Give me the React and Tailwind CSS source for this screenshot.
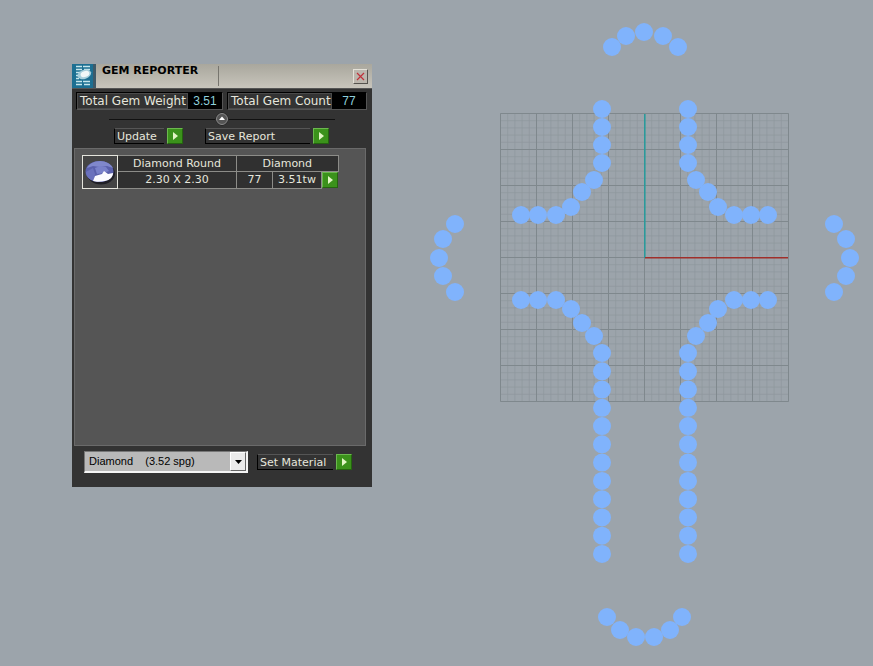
const BEAD_RADIUS = 9;

const range = (count, start, step) => Array.from({ length: count }, (_, i) => start + i * step);

const upperArms = [
  ...range(4, 109, 18).flatMap((y) => [[602, y], [688, y]]),
  [594, 180], [582, 192], [571, 207], [556, 215], [538, 215], [521, 215],
  [696, 180], [708, 192], [718, 207], [734, 215], [751, 215], [768, 215],
];

const lowerArms = [
  ...range(12, 353, 18.27).flatMap((y) => [[602, y], [688, y]]),
  [594, 336], [582, 323], [571, 309], [556, 300], [538, 300], [521, 300],
  [696, 336], [708, 323], [718, 309], [734, 300], [751, 300], [768, 300],
];

const endCaps = [
  [612, 47], [626, 36], [644, 32], [663, 36], [678, 47],
  [455, 224], [443, 239], [439, 258], [443, 276], [455, 292],
  [834, 224], [846, 239], [850, 258], [846, 276], [834, 292],
  [607, 617], [620, 630], [636, 637], [654, 637], [670, 630], [682, 617],
];

const beads = [...upperArms, ...lowerArms, ...endCaps];

const Viewport = () => (
  <svg viewBox="372 0 501 666" className="min-w-0 flex-1" role="img" aria-label="Top view of the gem layout">
    {range(41, 0, 7.2).map((d) => (
      <path key={d} d={`M${500.5 + d} 113.5v288M500.5 ${113.5 + d}h288`} stroke="#8f979c" strokeOpacity="0.7" />
    ))}
    {range(9, 0, 36).map((d) => (
      <path key={d} d={`M${500.5 + d} 113.5v288M500.5 ${113.5 + d}h288`} stroke="#7f888d" />
    ))}
    <path d="M644.8 114v144" stroke="#2a9a9b" strokeWidth="1.600" />
    <path d="M645 257.700h143" stroke="#a02f2a" strokeWidth="1.600" />
    {beads.map(([x, y]) => (
      <circle key={`${x}-${y}`} cx={x} cy={y} r={BEAD_RADIUS} fill="#80b3fc" />
    ))}
  </svg>
);

const Logo = () => (
  <svg viewBox="0 0 24 24" className="size-6 shrink-0" aria-hidden="true">
    <rect width="24" height="24" fill="#1d6f92" />
    <path d="M21 0h3v24h-3z" fill="#3f5a69" />
    <path
      d="M4 2.5h6M11 2.5h7M4 5.5h6M12 5.5h6M4 8.5h4M4 11.5h3M4 14.5h3M4 17.5h6M11 17.5h7M4 20.5h6M12 20.5h6"
      stroke="#c6e6ec"
      strokeWidth="1.500"
    />
    <ellipse cx="12.500" cy="10.500" rx="7" ry="4.500" fill="#a8cfdc" transform="rotate(-18 12 11)" />
    <ellipse cx="13" cy="10" rx="4.500" ry="3" fill="#f1f7f8" transform="rotate(-18 13 10)" />
  </svg>
);

const GemThumb = () => (
  <svg viewBox="0 0 34 31" className="block h-[31px] w-[34px]" aria-label="Round gem">
    <ellipse cx="18" cy="17.500" rx="14" ry="11" fill="#1f1f26" />
    <ellipse cx="16.500" cy="15.500" rx="14" ry="10.500" fill="#5a60ac" />
    <path d="M4 12c2-4 7-7 13-7s11 3 13 7l-6-2-7 1-7-1z" fill="#8088cc" />
    <path d="M3 16l7-4 2 6-1 7c-5-1-8-5-8-9z" fill="#6a71bd" />
    <path d="M12 12l5-2 6 1 3 4-5 2-7 1z" fill="#7981ca" />
    <path d="M10 25l2-5 7-2 2-3 4 3 5-1c0 4-3 7-8 8-4 1-9 1-12 0z" fill="#fbfbff" />
  </svg>
);

const PlayButton = ({ label }) => (
  <button
    type="button"
    aria-label={label}
    className="flex size-4 shrink-0 items-center justify-center border border-t-[#6cb84f] border-r-[#24640f] border-b-[#24640f] border-l-[#6cb84f] bg-[#3b921b]"
  >
    <svg viewBox="0 0 5 8" className="h-2 w-[5px]">
      <path d="M0 0l5 4-5 4z" fill="#e2f6c5" />
    </svg>
  </button>
);

const Total = ({ label, value, width }) => (
  <div className="flex h-[18px] border border-t-black border-r-[#555] border-b-[#555] border-l-black">
    <dt className={`flex items-center border border-[#4a4a4a] pl-0.5 whitespace-nowrap ${width}`}>{label}</dt>
    <dd className="flex w-[34px] items-center justify-center bg-black font-['Liberation_Sans',sans-serif] text-[#8fd0dc]">
      {value}
    </dd>
  </div>
);

const Action = ({ label, width }) => (
  <div className="flex items-center gap-[3px]">
    <span className={`flex h-4 items-center border-t border-b border-l border-t-[#555] border-b-black border-l-black pt-0.5 pl-0.5 whitespace-nowrap ${width}`}>
      {label}
    </span>
    <PlayButton label={label} />
  </div>
);

const GemTable = () => (
  <table className="border-collapse text-center leading-[14px]">
    <tbody className="bg-[#303030]">
      <tr className="h-4">
        <td rowSpan={2} className="border border-[#e4e4dc] bg-[#444] p-0">
          <GemThumb />
        </td>
        <td className="w-[119px] border border-[#8c8c88] p-0">Diamond Round</td>
        <td colSpan={3} className="border border-[#8c8c88] p-0">Diamond</td>
      </tr>
      <tr className="h-4">
        <td className="border border-[#8c8c88] p-0">2.30 X 2.30</td>
        <td className="w-9 border border-[#8c8c88] p-0">77</td>
        <td className="w-[49px] border border-[#8c8c88] p-0">3.51tw</td>
        <td className="w-4 p-0">
          <PlayButton label="Select gems" />
        </td>
      </tr>
    </tbody>
  </table>
);

const GemReporter = () => (
  <section className="mt-16 ml-[72px] flex w-[300px] shrink-0 flex-col self-start bg-[#333] text-[#e6e6dc]">
    <header className="flex h-[25px] items-center border-b border-[#555] bg-linear-to-b from-[#a9a79d] to-[#c8c5bc] text-black">
      <Logo />
      <h1 className="w-[122px] self-start pl-1.5 text-[11px] leading-[14px] font-bold whitespace-nowrap">GEM REPORTER</h1>
      <span className="h-5 w-px bg-[#77756e]" />
      <button
        type="button"
        aria-label="Close"
        className="mr-1 ml-auto flex size-[15px] items-center justify-center border border-t-[#e4e1d8] border-r-[#55534e] border-b-[#55534e] border-l-[#e4e1d8] bg-[#bbb6ad]"
      >
        <svg viewBox="0 0 9 9" className="size-[9px]">
          <path d="M1 1l7 7M8 1l-7 7" stroke="#c0303a" strokeWidth="1.200" />
        </svg>
      </button>
    </header>

    <dl className="flex justify-between pt-[3px] pr-[5px] pl-1 text-[12px]">
      <Total label="Total Gem Weight" value="3.51" width="w-[111px]" />
      <Total label="Total Gem Count" value="77" width="w-[104px]" />
    </dl>

    <div className="flex items-center px-[37px] pt-0.5">
      <span className="h-px flex-1 bg-[#111]" />
      <button type="button" aria-label="Collapse" className="rounded-full">
        <svg viewBox="0 0 14 14" className="size-3.5">
          <circle cx="7" cy="7" r="6" fill="#555" stroke="#161616" />
          <circle cx="7" cy="7" r="5.500" fill="none" stroke="#8b8b8b" />
          <path d="M7 4.500l3 3.500H4z" fill="#fff" />
        </svg>
      </button>
      <span className="h-px flex-1 bg-[#111]" />
    </div>

    <div className="flex gap-[22px] pt-0.5 pl-[42px]">
      <Action label="Update" width="w-[50px]" />
      <Action label="Save Report" width="w-[105px]" />
    </div>

    <div className="mt-1 mr-1.5 ml-0.5 h-[298px] border border-[#6a6a6a] bg-[#555] pt-1.5 pl-[7px]">
      <GemTable />
    </div>

    <footer className="flex items-center gap-[9px] pt-[5px] pb-3.5 pl-3">
      <div className="relative h-[22px] w-[164px] border-t border-r-2 border-b-2 border-l border-t-[#777] border-r-[#f4f4f4] border-b-[#f4f4f4] border-l-[#777]">
        <select
          aria-label="Material"
          className="block h-full w-full appearance-none rounded-none bg-[#b9b9b9] pl-1 font-['Liberation_Sans',sans-serif] text-[11px] text-black"
        >
          <option>{'Diamond\u00a0\u00a0\u00a0\u00a0(3.52 spg)'}</option>
        </select>
        <span className="pointer-events-none absolute inset-y-0 right-0 flex w-4 items-center justify-center border border-t-white border-r-[#666] border-b-[#666] border-l-white bg-[#ebebeb]">
          <svg viewBox="0 0 7 4" className="h-1 w-[7px]">
            <path d="M0 0h7L3.500 4z" fill="#000" />
          </svg>
        </span>
      </div>
      <Action label="Set Material" width="w-[76px]" />
    </footer>
  </section>
);

const App = () => (
  <main className="flex min-h-screen items-start overflow-hidden bg-[#9ca4ab] font-['DejaVu_Sans',sans-serif] text-[11px]">
    <GemReporter />
    <Viewport />
  </main>
);

export default App;
